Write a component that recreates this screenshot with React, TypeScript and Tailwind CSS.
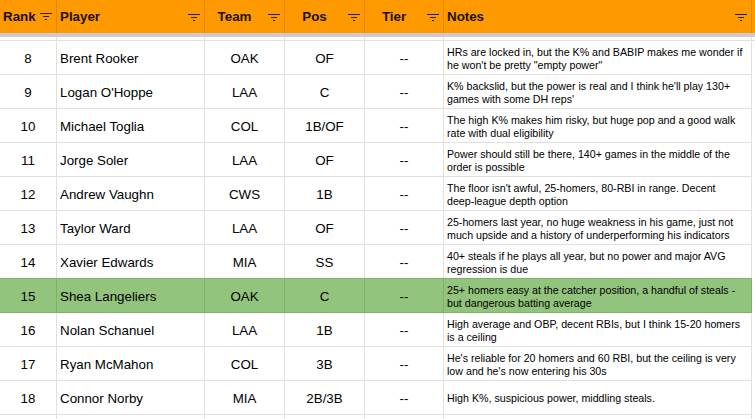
const players = [
  { rank: 8, name: 'Brent Rooker', team: 'OAK', pos: 'OF', notes: 'HRs are locked in, but the K% and BABIP makes me wonder if he won\'t be pretty "empty power"' },
  { rank: 9, name: "Logan O'Hoppe", team: 'LAA', pos: 'C', notes: "K% backslid, but the power is real and I think he'll play 130+ games with some DH reps'" },
  { rank: 10, name: 'Michael Toglia', team: 'COL', pos: '1B/OF', notes: 'The high K% makes him risky, but huge pop and a good walk rate with dual eligibility' },
  { rank: 11, name: 'Jorge Soler', team: 'LAA', pos: 'OF', notes: 'Power should still be there, 140+ games in the middle of the order is possible' },
  { rank: 12, name: 'Andrew Vaughn', team: 'CWS', pos: '1B', notes: "The floor isn't awful, 25-homers, 80-RBI in range. Decent deep-league depth option" },
  { rank: 13, name: 'Taylor Ward', team: 'LAA', pos: 'OF', notes: '25-homers last year, no huge weakness in his game, just not much upside and a history of underperforming his indicators' },
  { rank: 14, name: 'Xavier Edwards', team: 'MIA', pos: 'SS', notes: '40+ steals if he plays all year, but no power and major AVG regression is due', beforeHl: true },
  { rank: 15, name: 'Shea Langeliers', team: 'OAK', pos: 'C', notes: '25+ homers easy at the catcher position, a handful of steals - but dangerous batting average', hl: true },
  { rank: 16, name: 'Nolan Schanuel', team: 'LAA', pos: '1B', notes: 'High average and OBP, decent RBIs, but I think 15-20 homers is a ceiling' },
  { rank: 17, name: 'Ryan McMahon', team: 'COL', pos: '3B', notes: "He's reliable for 20 homers and 60 RBI, but the ceiling is very low and he's now entering his 30s" },
  { rank: 18, name: 'Connor Norby', team: 'MIA', pos: '2B/3B', notes: 'High K%, suspicious power, middling steals.' },
];

const cols = 'grid grid-cols-[57px_148px_80px_80px_79px_308px_3px]';

function FilterIcon() {
  return (
    <svg width="12" height="7" viewBox="0 0 12 7" className="shrink-0 text-[#222]">
      <rect x="0" y="0" width="12" height="1" fill="currentColor" />
      <rect x="3" y="3" width="6" height="1" fill="currentColor" />
      <rect x="5" y="6" width="2" height="1" fill="currentColor" />
    </svg>
  );
}

function HeaderCell({ label, center = true }: { label: string; center?: boolean }) {
  return (
    <div className={`relative flex h-[33px] items-center border-r border-[#db8b06] ${center ? 'justify-center pr-[20px]' : 'pl-[3px]'}`}>
      <span className="text-[13.33px] font-bold text-[#1b1200]">{label}</span>
      <div className="absolute right-[4px] top-[14px] leading-none">
        <FilterIcon />
      </div>
    </div>
  );
}

function Cell({ hl, className, children }: { hl?: boolean; className?: string; children: React.ReactNode }) {
  return (
    <div className={`flex items-center border-r pt-[2px] text-[13.33px] ${hl ? 'border-[#7fb369]' : 'border-[#e0e0e0]'} ${className ?? ''}`}>{children}</div>
  );
}

export default function App() {
  return (
    <div className="h-[419px] w-[755px] overflow-hidden bg-white font-['Liberation_Sans',Arial,sans-serif] text-black">
      <div className={`${cols} bg-[#ff9900]`}>
        <div className="flex h-[33px] items-center gap-[4px] border-r border-[#db8b06] pl-[3px]">
          <span className="text-[13.33px] font-bold text-[#1b1200]">Rank</span>
          <FilterIcon />
        </div>
        <HeaderCell label="Player" center={false} />
        <HeaderCell label="Team" />
        <HeaderCell label="Pos" />
        <HeaderCell label="Tier" />
        <HeaderCell label="Notes" center={false} />
        <div />
      </div>
      <div className="h-[4px] bg-[#cccccc]" />
      <div className={`${cols} h-[4px] border-b border-[#e0e0e0]`}>
        {[0, 1, 2, 3, 4, 5].map((i) => (
          <div key={i} className="border-r border-[#e0e0e0]" />
        ))}
      </div>
      {players.map((p) => (
        <div key={p.rank} className={`${cols} h-[34px]`}>
          <div className={`col-span-6 grid grid-cols-subgrid border-b ${p.hl ? 'border-[#7fb369] bg-[#93c47d]' : p.beforeHl ? 'border-[#7fb369]' : 'border-[#e0e0e0]'}`}>
            <Cell hl={p.hl} className="justify-center">{p.rank}</Cell>
            <Cell hl={p.hl} className="pl-[3px]">{p.name}</Cell>
            <Cell hl={p.hl} className="justify-center">{p.team}</Cell>
            <Cell hl={p.hl} className="justify-center">{p.pos}</Cell>
            <Cell hl={p.hl} className="justify-center">--</Cell>
            <div className={`flex items-center border-r pl-[3px] pr-[6px] pt-[2px] text-[10.67px] leading-[13px] ${p.hl ? 'border-[#7fb369]' : 'border-[#e0e0e0]'}`}>
              {p.notes}
            </div>
          </div>
          <div />
        </div>
      ))}
      <div className={`${cols} h-[5px]`}>
        {[0, 1, 2, 3, 4, 5].map((i) => (
          <div key={i} className="border-r border-[#e0e0e0]" />
        ))}
      </div>
    </div>
  );
}
